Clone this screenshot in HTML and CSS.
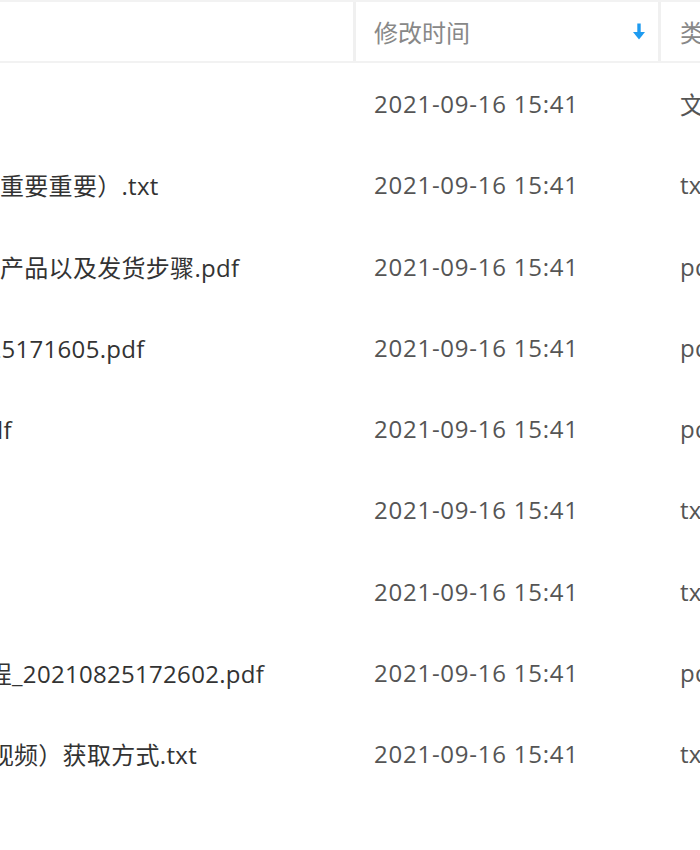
FILE: index.html
```html
<!DOCTYPE html>
<html lang="zh-CN">
<head>
    <meta charset="UTF-8">
    <meta name="viewport" content="width=device-width, initial-scale=1.0">
    <title>文件列表</title>
    <link rel="stylesheet" href="styles.css">
</head>
<body>

    <div class="file-list">
        <!-- Header -->
        <div class="list-head">
            <div class="col col-name">文件名</div>
            <div class="col col-time">
                <span>修改时间</span>
                <svg class="sort-icon" width="12" height="17" viewBox="0 0 12 17">
                    <rect x="4.3" y="0.5" width="3.4" height="9.5" fill="#1e9bf0"/>
                    <path d="M0 9 L12 9 L6 16.5 Z" fill="#1e9bf0"/>
                </svg>
            </div>
            <div class="col col-type">类型</div>
        </div>

        <!-- Rows -->
        <div class="list-row">
            <div class="col col-name">资料</div>
            <div class="col col-time">2021-09-16 15:41</div>
            <div class="col col-type">文件夹</div>
        </div>
        <div class="list-row">
            <div class="col col-name">新手必看使用说明（重要重要）.txt</div>
            <div class="col col-time">2021-09-16 15:41</div>
            <div class="col col-type">txt</div>
        </div>
        <div class="list-row">
            <div class="col col-name">新客户如何下单购买产品以及发货步骤.pdf</div>
            <div class="col col-time">2021-09-16 15:41</div>
            <div class="col col-type">pdf</div>
        </div>
        <div class="list-row">
            <div class="col col-name">资料清单1_20210825171605.pdf</div>
            <div class="col col-time">2021-09-16 15:41</div>
            <div class="col col-type">pdf</div>
        </div>
        <div class="list-row">
            <div class="col col-name">常见问题与解答A.pdf</div>
            <div class="col col-time">2021-09-16 15:41</div>
            <div class="col col-type">pdf</div>
        </div>
        <div class="list-row">
            <div class="col col-name">说明.txt</div>
            <div class="col col-time">2021-09-16 15:41</div>
            <div class="col col-type">txt</div>
        </div>
        <div class="list-row">
            <div class="col col-name">目录.txt</div>
            <div class="col col-time">2021-09-16 15:41</div>
            <div class="col col-type">txt</div>
        </div>
        <div class="list-row">
            <div class="col col-name">VIP软件安装使用教程_20210825172602.pdf</div>
            <div class="col col-time">2021-09-16 15:41</div>
            <div class="col col-type">pdf</div>
        </div>
        <div class="list-row">
            <div class="col col-name">2更多学习资料包（视频）获取方式.txt</div>
            <div class="col col-time">2021-09-16 15:41</div>
            <div class="col col-type">txt</div>
        </div>
    </div>

</body>
</html>
```

FILE: styles.css
```css
body {
    margin: 0;
    padding: 0;
    background-color: #fff;
    font-family: "Open Sans", "Noto Sans CJK SC", sans-serif;
    overflow: hidden;
}

/* the list is wider than the window, name column starts off-screen */
.file-list {
    margin-left: -400px;
    width: 1300px;
}

.list-head,
.list-row {
    display: grid;
    grid-template-columns: 756px 305px 239px;
}

.list-head {
    height: 59px;
    border-top: 2px solid #f2f2f2;
    border-bottom: 2px solid #f2f2f2;
    color: #888;
    font-size: 24px;
}

.list-head .col {
    display: flex;
    align-items: center;
    border-right: 3px solid #f0f0f0;
}

.list-head .col-time {
    justify-content: space-between;
    padding-right: 13px;
}

.list-row {
    height: 81.25px;
    font-size: 24px;
    letter-spacing: 0.3px;
    color: #555;
}

.list-row .col {
    display: flex;
    align-items: center;
    white-space: nowrap;
    overflow: hidden;
}

.col-name {
    padding-left: 181.3px;
}

.list-row .col-name {
    color: #333;
}

.col-time {
    padding-left: 18px;
}

.list-row .col-time {
    letter-spacing: 0.75px;
}

.col-type {
    padding-left: 19px;
}

.sort-icon {
    display: block;
}
```
